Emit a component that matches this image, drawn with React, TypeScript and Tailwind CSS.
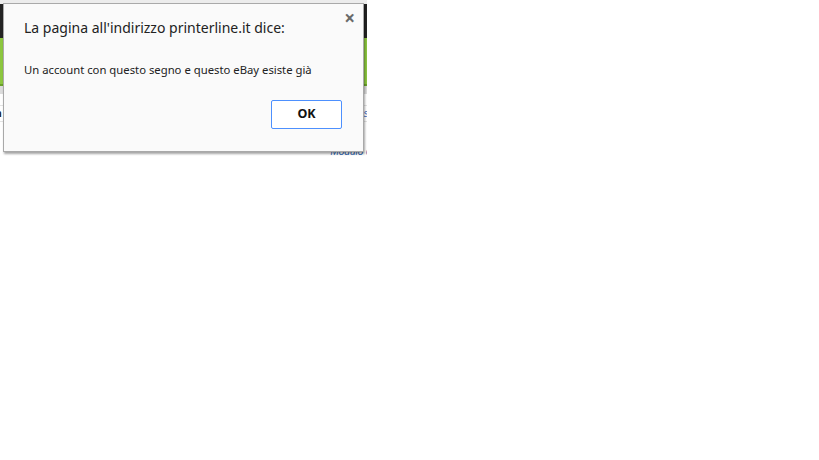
import * as React from "react";

function BackgroundPage() {
  return (
    <div className="flex flex-col w-[367px] h-[155px] overflow-hidden">
      <div className="h-[4px] bg-[#ececec]" />
      <div className="h-[34px] bg-[#232323]" />
      <div className="h-[48px] bg-[#8cc63f] border-b-2 border-[#6aa12a]" />
      <div className="h-[8px] bg-[#dcdcdc]" />
      <div className="flex-1 bg-white flex flex-col">
        <div className="h-[12px] border-b border-[#e3e3e3]" />
        <div className="h-[16px] flex justify-between items-center text-[11px] border-b border-[#e3e3e3] font-['Liberation_Sans',sans-serif]">
          <span className="font-bold text-[#222] -ml-[5px]">n</span>
          <span className="text-[#3a6bbf] italic -mr-[2px]">s</span>
        </div>
        <div className="flex-1 flex items-end justify-end">
          <span className="text-[10px] italic text-[#2a5fb0] font-['Liberation_Sans',sans-serif] -mr-[4px] leading-[10px] -mb-[2px]">
            Modulo c
          </span>
        </div>
      </div>
    </div>
  );
}

export default function App() {
  return (
    <div className="relative w-[819px] h-[460px] bg-white overflow-hidden font-['Noto_Sans',sans-serif]">
      <BackgroundPage />
      <div className="absolute left-[3px] top-[3px] w-[361px] h-[149px] bg-[#fafafa] border border-[#a9a9a9] shadow-[1px_2px_2px_rgba(0,0,0,0.35)] flex flex-col">
        <div className="flex justify-between">
          <div className="pl-[20px] pt-[13px] text-[14px] leading-[22px] text-[#222]">
            La pagina all'indirizzo printerline.it dice:
          </div>
          <div className="pr-[8px] pt-[3px] text-[#6a6a6a] text-[19px] font-bold leading-[22px]">×</div>
        </div>
        <div className="pl-[20px] pt-[23px] text-[11.3px] leading-[16px] text-[#222]">
          Un account con questo segno e questo eBay esiste già
        </div>
        <div className="flex justify-end pr-[21px] pt-[22px]">
          <button className="w-[71px] h-[29px] border border-[#4d90fe] rounded-[2px] bg-white text-[12.5px] font-bold text-[#111]">
            OK
          </button>
        </div>
      </div>
    </div>
  );
}
